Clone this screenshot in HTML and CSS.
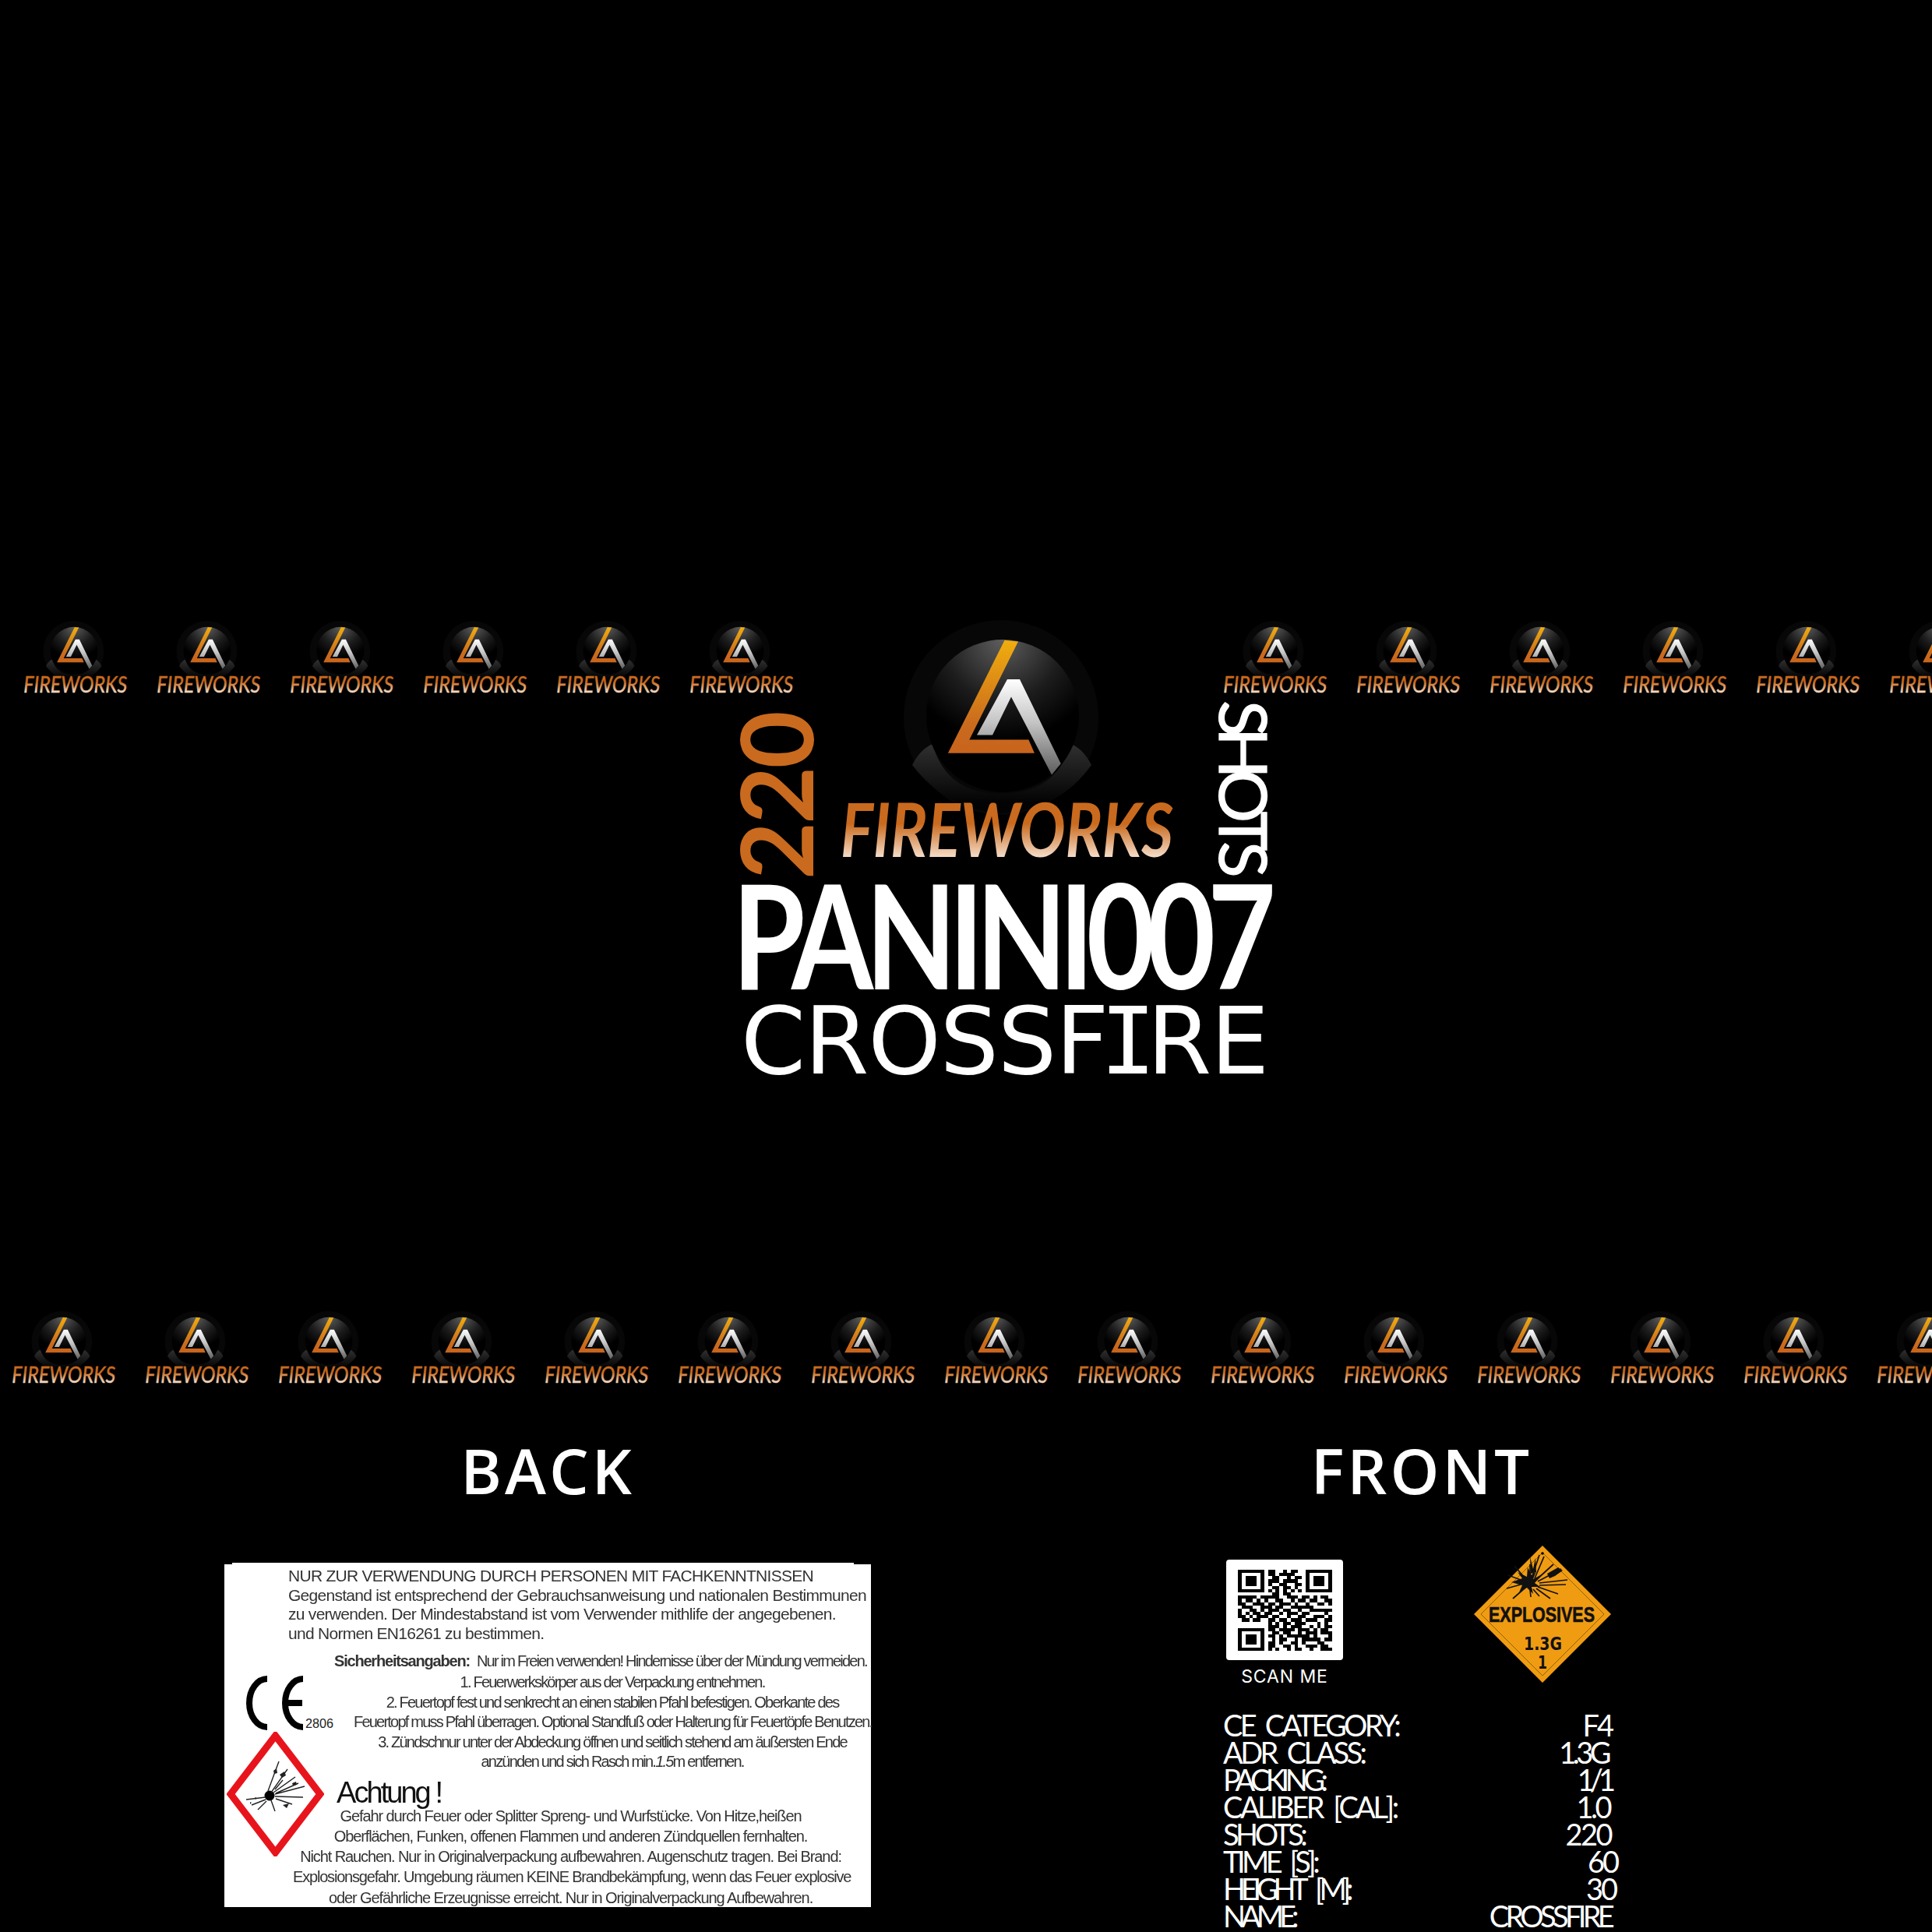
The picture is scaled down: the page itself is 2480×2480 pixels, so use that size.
FILE: index.html
```html
<!DOCTYPE html>
<html lang="de">
<head>
<meta charset="utf-8">
<title>PANINI007 Crossfire</title>
<link rel="stylesheet" href="styles.css">
</head>
<body>
<svg class="defs" width="0" height="0" aria-hidden="true">
  <defs>
    <linearGradient id="gL" x1="0" y1="32" x2="0" y2="177" gradientUnits="userSpaceOnUse">
      <stop offset="0" stop-color="#f0ad0e"/><stop offset=".75" stop-color="#c96a1e"/><stop offset="1" stop-color="#c8641c"/>
    </linearGradient>
    <linearGradient id="gA" x1="0" y1="82" x2="0" y2="205" gradientUnits="userSpaceOnUse">
      <stop offset="0" stop-color="#ffffff"/><stop offset=".45" stop-color="#c4c4c4"/><stop offset="1" stop-color="#5c5c5c"/>
    </linearGradient>
    <radialGradient id="gS" cx="132" cy="31" r="130" gradientUnits="userSpaceOnUse">
      <stop offset="0" stop-color="#5e5e5e"/><stop offset=".6" stop-color="#1c1c1c"/><stop offset="1" stop-color="#000"/>
    </radialGradient>
    <linearGradient id="gC" x1="0" y1="165" x2="0" y2="240" gradientUnits="userSpaceOnUse">
      <stop offset="0" stop-color="#303030"/><stop offset="1" stop-color="#030303"/>
    </linearGradient>
    <linearGradient id="gT" x1="0" y1="241" x2="0" y2="310" gradientUnits="userSpaceOnUse">
      <stop offset="0" stop-color="#c96a1e"/><stop offset=".38" stop-color="#c96a1e"/><stop offset="1" stop-color="#f5dcc8"/>
    </linearGradient>
    <symbol id="brand" viewBox="-80 0 440 320">
      <circle cx="130" cy="131" r="125" fill="#070707"/>
      <path d="M42 165Q26 172 16 192Q60 250 130 254Q205 250 246 192Q236 172 220 165Q200 229 130 229Q60 229 42 165Z" fill="url(#gC)"/>
      <circle cx="132" cy="129" r="98" fill="url(#gS)"/>
      <polygon points="134.6,31.8 152,33.5 89.3,159.6 165.4,159.6 172.9,176.7 61.9,176.7" fill="url(#gL)"/>
      <polygon points="138,82 154,82 206.7,190.2 195,204.5 143,104.5 119,153.5 99,153.5" fill="url(#gA)"/>
      <text class="brand-word" x="-76" y="310" textLength="427" lengthAdjust="spacingAndGlyphs" fill="url(#gT)" stroke="url(#gT)">FIREWORKS</text>
    </symbol>
  </defs>
</svg>

<main class="sheet">
  <section class="hero">
    <div class="logo-group">
      <svg class="brand-mini"><use href="#brand"/></svg>
      <svg class="brand-mini"><use href="#brand"/></svg>
      <svg class="brand-mini"><use href="#brand"/></svg>
      <svg class="brand-mini"><use href="#brand"/></svg>
      <svg class="brand-mini"><use href="#brand"/></svg>
      <svg class="brand-mini"><use href="#brand"/></svg>
    </div>
    <div class="hero-center">
      <div class="hero-top">
        <div class="shots-count">220</div>
        <svg class="brand-big"><use href="#brand"/></svg>
        <div class="shots-word">SHOTS</div>
      </div>
      <div class="code">PANINI007</div>
      <div class="name">CROSSF<span class="serif-i">I</span>RE</div>
    </div>
    <div class="logo-group logo-group-right">
      <svg class="brand-mini"><use href="#brand"/></svg>
      <svg class="brand-mini"><use href="#brand"/></svg>
      <svg class="brand-mini"><use href="#brand"/></svg>
      <svg class="brand-mini"><use href="#brand"/></svg>
      <svg class="brand-mini"><use href="#brand"/></svg>
      <svg class="brand-mini"><use href="#brand"/></svg>
    </div>
  </section>

  <section class="logo-band">
    <svg class="brand-mini"><use href="#brand"/></svg>
    <svg class="brand-mini"><use href="#brand"/></svg>
    <svg class="brand-mini"><use href="#brand"/></svg>
    <svg class="brand-mini"><use href="#brand"/></svg>
    <svg class="brand-mini"><use href="#brand"/></svg>
    <svg class="brand-mini"><use href="#brand"/></svg>
    <svg class="brand-mini"><use href="#brand"/></svg>
    <svg class="brand-mini"><use href="#brand"/></svg>
    <svg class="brand-mini"><use href="#brand"/></svg>
    <svg class="brand-mini"><use href="#brand"/></svg>
    <svg class="brand-mini"><use href="#brand"/></svg>
    <svg class="brand-mini"><use href="#brand"/></svg>
    <svg class="brand-mini"><use href="#brand"/></svg>
    <svg class="brand-mini"><use href="#brand"/></svg>
    <svg class="brand-mini"><use href="#brand"/></svg>
  </section>

  <section class="panels">
    <div class="panel-back">
      <h2 class="panel-title">BACK</h2>
      <article class="label-card">
        <svg class="ce-mark" viewBox="0 0 112 70" role="img" aria-label="CE 2806">
          <path d="M27 4A23 31 0 0 0 27 66" class="ce-stroke"/>
          <path d="M73 4A23 31 0 0 0 73 66M52 35H72" class="ce-stroke"/>
          <text class="ce-num" x="76" y="67" textLength="36" lengthAdjust="spacingAndGlyphs">2806</text>
        </svg>
        <svg class="ghs" viewBox="0 0 125 160" role="img" aria-label="GHS01">
          <polygon points="62.5,5 120,80 62.5,155 5,80" class="ghs-frame"/>
          <circle cx="55" cy="82" r="6.5"/>
          <path class="ghs-ray" d="M53 76L67 38M57 78L78 48M60 78L88 58M62 80L100 70M62 83L98 84M63 86L84 93M50 84L25 87M50 87L32 94M51 89L40 100M57 88L62 102M62 74L72 62M63 79L92 66"/>
          <path class="ghs-dot" d="M68 55l6-4 2 5-5 3zM84 66l5-2 1 4-5 1zM72 94l8-2-3 6zM36 84l3 1-2 2zM30 90l2 1-2 2zM60 50l4-3 1 6-4 1z"/>
        </svg>
        <div class="intro">
          <p class="ln ln-a">NUR ZUR VERWENDUNG DURCH PERSONEN MIT FACHKENNTNISSEN</p>
          <p class="ln ln-b">Gegenstand ist entsprechend der Gebrauchsanweisung und nationalen Bestimmunen</p>
          <p class="ln ln-c">zu verwenden. Der Mindestabstand ist vom Verwender mithlife der angegebenen.</p>
          <p class="ln ln-d">und Normen EN16261 zu bestimmen.</p>
        </div>
        <p class="safety"><strong class="safety-head">Sicherheitsangaben:</strong><span class="safety-text">Nur im Freien verwenden! Hindernisse über der Mündung vermeiden.</span></p>
        <div class="steps">
          <p class="ln">1. Feuerwerkskörper aus der Verpackung entnehmen.</p>
          <p class="ln">2. Feuertopf fest und senkrecht an einen stabilen Pfahl befestigen. Oberkante des</p>
          <p class="ln">Feuertopf muss Pfahl überragen. Optional Standfuß oder Halterung für Feuertöpfe Benutzen.</p>
          <p class="ln">3. Zündschnur unter der Abdeckung öffnen und seitlich stehend am äußersten Ende</p>
          <p class="ln">anzünden und sich Rasch min.<i>1.5</i>m entfernen.</p>
        </div>
        <h3 class="achtung">Achtung !</h3>
        <div class="warning">
          <p class="ln">Gefahr durch Feuer oder Splitter Spreng- und Wurfstücke. Von Hitze,heißen</p>
          <p class="ln">Oberflächen, Funken, offenen Flammen und anderen Zündquellen fernhalten.</p>
          <p class="ln">Nicht Rauchen. Nur in Originalverpackung aufbewahren. Augenschutz tragen. Bei Brand:</p>
          <p class="ln wa-tight">Explosionsgefahr. Umgebung räumen KEINE Brandbekämpfung, wenn das Feuer explosive</p>
          <p class="ln">oder Gefährliche Erzeugnisse erreicht. Nur in Originalverpackung Aufbewahren.</p>
        </div>
      </article>
    </div>

    <div class="panel-front">
      <h2 class="panel-title">FRONT</h2>
      <div class="badges">
        <figure class="qr">
          <div class="qr-box">
            <svg class="qr-code" viewBox="0 0 25 25" preserveAspectRatio="none" role="img" aria-label="QR code">
              <path d="M0 .5h7m1 0h2m2 0h1m1 0h2m2 0h7M0 1.5h1m5 0h1m1 0h2m1 0h4m3 0h1m5 0h1M0 2.5h1m1 0h3m1 0h1m2 0h2m2 0h1m1 0h2m1 0h1m1 0h3m1 0h1M0 3.5h1m1 0h3m1 0h1m1 0h3m1 0h4m2 0h1m1 0h3m1 0h1M0 4.5h1m1 0h3m1 0h1m1 0h1m2 0h2m2 0h2m1 0h1m1 0h3m1 0h1M0 5.5h1m5 0h1m2 0h2m1 0h2m1 0h1m2 0h1m5 0h1M0 6.5h7m1 0h1m1 0h1m1 0h1m1 0h1m1 0h1m1 0h7M9 7.5h2m1 0h2M0 8.5h5m1 0h5m2 0h3m1 0h2m1 0h1m1 0h2M0 9.5h1m1 0h2m1 0h1m1 0h1m2 0h2m2 0h1m1 0h2m1 0h2m2 0h2M0 10.5h2m2 0h3m1 0h2m1 0h3m1 0h1m2 0h1m2 0h2m1 0h1M1 11.5h3m2 0h3m1 0h2m2 0h6M0 12.5h1m2 0h2m1 0h1m1 0h3m1 0h2m2 0h1m2 0h6M0 13.5h1m1 0h1m1 0h2m1 0h2m2 0h1m1 0h3m1 0h2m4 0h1M0 14.5h2m1 0h1m1 0h3m1 0h2m2 0h1m2 0h2m2 0h3m1 0h1M1 15.5h2m1 0h2m2 0h2m1 0h2m1 0h3m1 0h3m2 0h2M8 16.5h1m1 0h1m1 0h2m1 0h3m3 0h1m1 0h1M8 17.5h3m1 0h1m1 0h3m2 0h1m1 0h1m1 0h3M0 18.5h7m1 0h2m1 0h4m1 0h3m1 0h1m1 0h2M0 19.5h1m5 0h1m2 0h2m1 0h2m2 0h1m1 0h3m1 0h3M0 20.5h1m1 0h3m1 0h1m1 0h2m1 0h1m1 0h6m1 0h1m3 0h1M0 21.5h1m1 0h3m1 0h1m2 0h1m1 0h2m2 0h1m1 0h5m1 0h2M0 22.5h1m1 0h3m1 0h1m1 0h2m1 0h1m2 0h2m1 0h1m3 0h2M0 23.5h1m5 0h1m1 0h2m2 0h2m1 0h1m2 0h3m1 0h2M0 24.5h7m1 0h1m1 0h1m2 0h1m1 0h2m2 0h1m2 0h3"/>
            </svg>
          </div>
          <figcaption class="qr-caption">SCAN ME</figcaption>
        </figure>
        <svg class="adr" viewBox="0 0 176 176" role="img" aria-label="Explosives 1.3G 1">
          <polygon points="88,0 176,88 88,176 0,88" class="adr-fill"/>
          <polygon points="88,9 167,88 88,167 9,88" class="adr-line"/>
          <circle cx="88" cy="10" r="1.8"/>
          <path class="adr-burst" d="M48 47L62 42L56 34L68 40L69 28L74 38L80 33L76 43L89 36L78 48L85 53L74 53L76 62L68 54L58 60L62 51Z"/>
          <path class="adr-burst" d="M94 36L108 28L114 32L104 39L97 42ZM72 14L76 30L79 16L80 34L73 36Z"/>
          <path class="adr-ray" d="M72 44L72 24M74 42L84 12M78 42L90 14M80 44L102 24M82 46L112 30M84 48L120 44M84 51L118 50M82 53L108 62M80 55L98 68M76 56L84 65M72 56L73 66M66 54L50 68M60 50L42 55M60 44L44 38M64 40L52 26"/>
          <text class="adr-title" x="19" y="98" textLength="136" lengthAdjust="spacingAndGlyphs">EXPLOSIVES</text>
          <text class="adr-code" x="64" y="134" textLength="49" lengthAdjust="spacingAndGlyphs">1.3G</text>
          <text class="adr-code" x="82" y="158" textLength="12" lengthAdjust="spacingAndGlyphs">1</text>
        </svg>
      </div>
      <dl class="specs">
        <div class="spec"><dt class="sl-a">CE CATEGORY:</dt><dd class="sv-a">F4</dd></div>
        <div class="spec"><dt class="sl-b">ADR CLASS:</dt><dd class="sv-b">1.3G</dd></div>
        <div class="spec"><dt class="sl-c">PACKING:</dt><dd class="sv-c">1/1</dd></div>
        <div class="spec"><dt class="sl-d">CALIBER [CAL]:</dt><dd class="sv-d">1.0</dd></div>
        <div class="spec"><dt class="sl-e">SHOTS:</dt><dd class="sv-e">220</dd></div>
        <div class="spec"><dt class="sl-f">TIME [S]:</dt><dd class="sv-f">60</dd></div>
        <div class="spec"><dt class="sl-g">HEIGHT [M]:</dt><dd class="sv-g">30</dd></div>
        <div class="spec"><dt class="sl-h">NAME:</dt><dd class="sv-h">CROSSFIRE</dd></div>
      </dl>
    </div>
  </section>
</main>
</body>
</html>
```
FILE: styles.css
```css
* { box-sizing: border-box; margin: 0; padding: 0; }
html, body { background: #000; }
body { width: 2480px; height: 2480px; overflow: hidden; font-family: "Lato", sans-serif; color: #fff; }
.defs { position: absolute; }
.sheet { width: 2480px; height: 2480px; padding-top: 795px; overflow: hidden; background: #000; }

.brand-word { font-family: "Lato", sans-serif; font-style: italic; font-weight: var(--word-weight, 700); font-size: 96px; stroke-width: var(--word-stroke, 0); transform: translateY(var(--word-shift, 0)); }
.brand-mini { --word-weight: 400; --word-shift: -9px; --word-stroke: 1.6px; width: 137px; height: 100px; flex: none; }
.brand-big { width: 440px; height: 320px; flex: none; margin: -5px 0 0 32px; }

.hero { height: 886px; display: grid; grid-template-columns: 938px 712px 830px; align-items: start; }
.logo-group { display: flex; gap: 34px; padding-left: 29px; }
.logo-group-right { margin-left: -110px; }
.hero-center { display: flex; flex-direction: column; position: relative; }

.hero-top { display: flex; height: 337px; }
.shots-count, .shots-word { writing-mode: vertical-rl; white-space: nowrap; flex: none; font-family: "Lato", sans-serif; }
.shots-count { margin: 119px 0 0 8px; width: 97px; line-height: 97px; font-size: 128px; font-weight: 700; letter-spacing: -3px; color: #c96a1e; transform: rotate(180deg); height: 215px; }
.shots-word { margin: 104px 0 0 52px; width: 62px; line-height: 62px; font-size: 86px; font-weight: 400; letter-spacing: -12px; -webkit-text-stroke: 1.2px #fff; height: 228px; }

.code { height: 133px; margin-left: 2px; line-height: 133px; font-size: 185px; font-weight: 700; letter-spacing: -12px; white-space: nowrap; transform: scaleX(.817); transform-origin: left center; }
.name { margin: 29px 0 0 13px; height: 87px; line-height: 87px; font-family: "DejaVu Sans", sans-serif; font-size: 119px; letter-spacing: -1.3px; white-space: nowrap; }
.serif-i { font-family: "DejaVu Sans Mono", monospace; margin: 0 -10px; }

.logo-band { display: flex; gap: 34px; padding-left: 14px; height: 100px; }

.panels { display: grid; grid-template-columns: 830px 510px; column-gap: 452px; padding-left: 288px; padding-top: 65px; }
.panel-title { height: 138px; line-height: 82px; font-family: "Open Sans", sans-serif; font-weight: 600; font-size: 80px; letter-spacing: 4px; text-align: center; }

.label-card { position: relative; height: 440px; margin-top: 24px; padding-top: 3px; background: #fff; color: #333; font-family: "Liberation Sans", sans-serif; font-size: 20px; }
.label-card::before { content: ""; position: absolute; top: -2px; left: 10px; right: 22px; height: 2px; background: #fff; }
.ln { height: 25.5px; line-height: 25.5px; white-space: nowrap; }
.intro { margin-left: 82px; font-size: 21px; letter-spacing: -.72px; filter: blur(.35px); }
.intro .ln { height: 24.5px; line-height: 24.5px; }
.safety { margin: 10px 0 0 141px; display: flex; height: 26px; line-height: 26px; white-space: nowrap; letter-spacing: -1.78px; filter: blur(.35px); }
.safety-head { margin-right: 9px; letter-spacing: -1.2px; }
.steps { width: 664px; margin: 2px 0 0 166px; text-align: center; letter-spacing: -1.78px; filter: blur(.35px); }
.achtung { margin: 6px 0 0 144px; height: 40px; line-height: 40px; font-size: 38px; font-weight: 400; letter-spacing: -2.95px; white-space: nowrap; color: #111; filter: blur(.35px); }
.warning { width: 713px; margin: -3px 0 0 88px; text-align: center; letter-spacing: -1.1px; filter: blur(.35px); }
.warning .ln { height: 26.3px; line-height: 26.3px; }
.warning .wa-tight { letter-spacing: -1.19px; }

.ce-mark { position: absolute; left: 28px; top: 143px; width: 112px; height: 70px; }
.ce-stroke { fill: none; stroke: #000; stroke-width: 8; }
.ce-num { font-family: "Liberation Sans", sans-serif; font-size: 17px; fill: #222; }
.ghs { position: absolute; left: 3px; top: 215px; width: 125px; height: 160px; }
.ghs-frame { fill: #fff; stroke: #e8141c; stroke-width: 9; }
.ghs-ray { stroke: #222; stroke-width: 1.4; fill: none; }
.ghs-dot { fill: #222; }

.badges { display: flex; height: 213px; }
.qr { width: 161px; margin: 18px 0 0 4px; }
.qr-box { width: 150px; height: 129px; display: flex; align-items: center; justify-content: center; background: #fff; border-radius: 4px; }
.qr-code { width: 121px; height: 104px; display: block; }
.qr-code path { fill: none; stroke: #000; stroke-width: 1; shape-rendering: crispEdges; }
.qr-caption { width: 150px; margin-top: 7px; font-family: "Inter", sans-serif; font-size: 23px; line-height: 28px; letter-spacing: .9px; text-align: center; }
.adr { width: 176px; height: 176px; margin-left: 157px; flex: none; }
.adr-fill { fill: #f09c12; }
.adr-line { fill: none; stroke: #7a5200; stroke-width: .8; }
.adr-burst { fill: #111; }
.adr-ray { fill: none; stroke: #111; stroke-width: 1.7; }
.adr-title { font-family: "Liberation Sans", sans-serif; font-weight: 700; font-size: 28px; fill: #111; stroke: #111; stroke-width: .7; }
.adr-code { font-family: "DejaVu Sans", sans-serif; font-weight: 700; font-size: 23px; fill: #111; }

.specs { display: flex; flex-direction: column; font-family: "Lato", sans-serif; font-size: 38px; letter-spacing: -3px; }
.spec { display: flex; justify-content: space-between; height: 35px; line-height: 35px; white-space: nowrap; word-spacing: 8px; }
.sl-a { letter-spacing: -3.75px; }
.sl-b { letter-spacing: -3.6px; }
.sl-c { letter-spacing: -5.5px; }
.sl-d { letter-spacing: -3.5px; }
.sl-e { letter-spacing: -4.5px; }
.sl-f { letter-spacing: -4.5px; }
.sl-g { letter-spacing: -6.2px; word-spacing: 12px; }
.sl-h { letter-spacing: -6px; }
.sv-a { padding-right: 11px; }
.sv-b { padding-right: 16px; letter-spacing: -4.5px; }
.sv-c { padding-right: 12px; letter-spacing: -6px; }
.sv-d { padding-right: 14px; letter-spacing: -3.5px; }
.sv-e { padding-right: 12px; letter-spacing: -2.5px; }
.sv-f { padding-right: 4px; }
.sv-g { padding-right: 6px; }
.sv-h { padding-right: 12px; letter-spacing: -4.7px; }
```
